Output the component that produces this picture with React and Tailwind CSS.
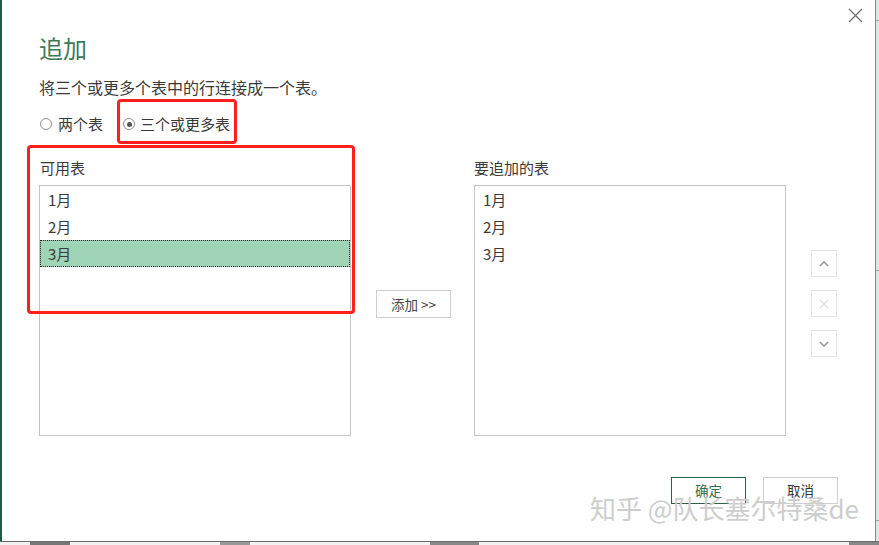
import React from "react";

const font = { fontFamily: '"Noto Sans CJK SC", "Noto Sans", sans-serif' };

const leftItems = ["1月", "2月", "3月"];
const rightItems = ["1月", "2月", "3月"];

const Radio = ({ checked }) => (
  <span className="flex h-[12px] w-[12px] items-center justify-center rounded-full border border-[#8f8f8f] bg-white">
    {checked && <span className="h-[5px] w-[5px] rounded-full bg-[#555]" />}
  </span>
);

const SideButton = ({ children }) => (
  <div className="flex h-[27px] w-[26px] items-center justify-center border border-[#e3e3e3] bg-white">
    {children}
  </div>
);

const ListBox = ({ items, selected }) => (
  <div className="h-[251px] w-[312px] border border-[#c4c4c4] bg-white">
    {items.map((item, i) => (
      <div
        key={item}
        className={
          i === selected
            ? "flex h-[27px] items-center border border-dotted border-[#222] bg-[#9fd4b6] pl-[7px] text-[15px] leading-[27px] text-[#3a3a3a]"
            : "flex h-[27px] items-center pl-[8px] text-[15px] leading-[27px] text-[#3a3a3a]"
        }
      >
        {item}
      </div>
    ))}
  </div>
);

export default function App() {
  return (
    <div className="flex h-[545px] w-[879px] flex-col overflow-hidden bg-white" style={font}>
      <div className="flex h-[541px]">
        <div className="w-[2px] bg-[#1d5b43]" />

        <div className="relative flex-1 bg-white pl-[37px]">
          {/* close */}
          <div className="absolute right-[12px] top-[8px]">
            <svg width="15" height="15" viewBox="0 0 15 15">
              <path d="M1 1 L14 14 M14 1 L1 14" stroke="#707070" strokeWidth="1.3" fill="none" />
            </svg>
          </div>

          <div className="pt-[32px] text-[24px] leading-[32px] text-[#3b7a57]">追加</div>
          <div className="mt-[12px] text-[16px] leading-[22px] text-[#3a3a3a]">
            将三个或更多个表中的行连接成一个表。
          </div>

          <div className="mt-[15px] flex items-center text-[15px] leading-[22px] text-[#3a3a3a]">
            <span className="ml-[1px] mr-[6px]">
              <Radio />
            </span>
            <span>两个表</span>
            <span className="ml-[20px] mr-[5px]">
              <Radio checked />
            </span>
            <span>三个或更多表</span>
          </div>

          <div className="mt-[22px] flex">
            <div className="flex flex-col">
              <div className="mb-[6px] pl-[1px] text-[15px] leading-[22px] text-[#3a3a3a]">可用表</div>
              <ListBox items={leftItems} selected={2} />
            </div>

            <div className="ml-[25px] pt-[133px]">
              <div className="flex h-[28px] w-[75px] items-center justify-center border border-[#cfcfcf] bg-white text-[13.5px] text-[#444]">
                添加 &gt;&gt;
              </div>
            </div>

            <div className="ml-[23px] flex flex-col">
              <div className="mb-[6px] text-[15px] leading-[22px] text-[#3a3a3a]">要追加的表</div>
              <ListBox items={rightItems} selected={-1} />
            </div>

            <div className="ml-[25px] flex flex-col gap-[13px] pt-[93px]">
              <SideButton>
                <svg width="12" height="8" viewBox="0 0 12 8">
                  <path d="M2 6 L6 2 L10 6" stroke="#9a9a9a" strokeWidth="1.6" fill="none" />
                </svg>
              </SideButton>
              <SideButton>
                <svg width="12" height="12" viewBox="0 0 12 12">
                  <path d="M2 2 L10 10 M10 2 L2 10" stroke="#e0e0e0" strokeWidth="1.4" fill="none" />
                </svg>
              </SideButton>
              <SideButton>
                <svg width="12" height="8" viewBox="0 0 12 8">
                  <path d="M2 2 L6 6 L10 2" stroke="#9a9a9a" strokeWidth="1.6" fill="none" />
                </svg>
              </SideButton>
            </div>
          </div>

          <div className="mt-[41px] flex justify-end gap-[17px] pr-[37px]">
            <div className="flex h-[27px] w-[75px] items-center justify-center border border-[#2f5f47] bg-white text-[13.5px] text-[#2f6e4c]">
              确定
            </div>
            <div className="flex h-[27px] w-[75px] items-center justify-center border border-[#cfcfcf] bg-white text-[13.5px] text-[#333]">
              取消
            </div>
          </div>

          {/* annotation boxes */}
          <div className="absolute left-[115px] top-[99px] h-[45px] w-[120px] rounded-[4px] border-[3px] border-[#ff1f1f]" />
          <div className="absolute left-[25px] top-[145px] h-[169px] w-[328px] rounded-[4px] border-[3px] border-[#ff1f1f]" />

          {/* watermark */}
          <div className="absolute left-[588px] top-[495px] whitespace-nowrap text-[26px] leading-[26px] text-[#cdcdcd]">
            知乎 @队长塞尔特桑de
          </div>
        </div>

        <div className="w-[1px] bg-[#8c8c8c]" />
        <div className="flex w-[3px] flex-col justify-between bg-[#dfe6e2] py-[20px]">
          <div className="h-[1px] bg-[#9aa]" />
          <div className="h-[1px] bg-[#9aa]" />
          <div className="h-[1px] bg-[#9aa]" />
        </div>
      </div>
      <div className="h-[1px] bg-[#6b6b6b]" />
      <div className="flex flex-1 bg-[#f2f2f2]">
        <div className="ml-[30px] w-[40px] bg-[#777]" />
        <div className="ml-[150px] w-[30px] bg-[#999]" />
        <div className="ml-[180px] w-[50px] bg-[#888]" />
        <div className="ml-[370px] w-[30px] bg-[#888]" />
      </div>
    </div>
  );
}
